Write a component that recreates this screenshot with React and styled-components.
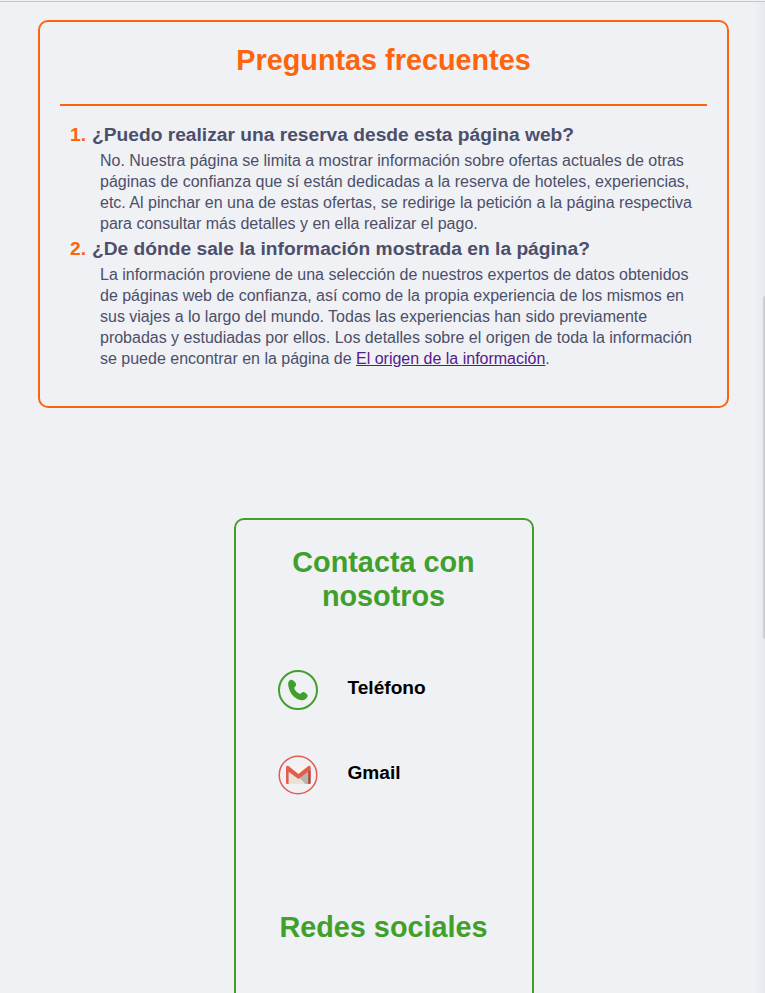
import React from 'react';
import styled, { createGlobalStyle } from 'styled-components';

const PEACH = '#fe640b';
const GREEN = '#40a02b';
const TEXT = '#4c4f69';

const GlobalStyle = createGlobalStyle`
  * { box-sizing: border-box; }
  body {
    margin: 0;
    overflow: hidden;
    background: #eff1f5;
    color: ${TEXT};
    font-family: "Liberation Sans", Arial, sans-serif;
  }
`;

const Page = styled.main`
  position: relative;
  height: 993px;
  overflow: hidden;
  border-top: 1px solid #eff1f5;
  display: flex;
  flex-direction: column;
  align-items: flex-start;
  box-shadow: inset 0 1px 0 #c3c9c5;
`;

const ScrollEdge = styled.div`
  position: absolute;
  top: 1px;
  right: 0;
  width: 12px;
  height: 991px;
  background: linear-gradient(to right, #eff1f5, #e6e9ef);
`;

const ScrollThumb = styled.div`
  position: absolute;
  top: 295px;
  right: 0;
  width: 2px;
  height: 343px;
  border-radius: 2px 0 0 2px;
  background: #cdced2;
`;

const Faq = styled.section`
  flex: none;
  width: 691px;
  height: 388px;
  margin: 19px 0 0 38px;
  padding: 0 20px;
  border: 2px solid ${PEACH};
  border-radius: 10px;
`;

const FaqTitle = styled.h1`
  height: 84px;
  margin: 0;
  padding-top: 21px;
  border-bottom: 2px solid ${PEACH};
  color: ${PEACH};
  font-size: 28.8px;
  line-height: 34px;
  text-align: center;
`;

const Questions = styled.ol`
  margin: 0;
  padding: 16px 0 0 10px;
  list-style: none;
`;

const Question = styled.h2`
  display: flex;
  gap: 6px;
  margin: 0;
  height: 28px;
  font-size: 19.2px;
  line-height: 26px;
  white-space: nowrap;
`;

const Index = styled.span`
  color: ${PEACH};
`;

const Answer = styled.p`
  margin: 0 0 2px;
  padding-left: 30px;
  font-size: 16px;
  letter-spacing: -0.005px;
  line-height: 21px;
  white-space: nowrap;
`;

const OriginLink = styled.a`
  color: #551a8b;
  text-decoration: underline;
`;

const Contact = styled.section`
  flex: none;
  width: 300px;
  height: 600px;
  margin: 110px 0 0 234px;
  padding: 25px 21px 0 20px;
  border: 2px solid ${GREEN};
  border-radius: 10px;
`;

const ContactTitle = styled.h2`
  margin: 0;
  color: ${GREEN};
  font-size: 28.8px;
  line-height: 34px;
  text-align: center;
`;

const Channels = styled.ul`
  display: flex;
  flex-direction: column;
  gap: 45px;
  margin: 0;
  padding: 57px 0 115px 22px;
  list-style: none;
`;

const Channel = styled.li`
  display: flex;
  gap: 29.5px;
  height: 40px;
  color: #000;
  font-size: 19.1px;
  font-weight: bold;
  line-height: 36px;

  svg { flex: none; }
`;

const PhoneIcon = () => (
  <svg width="40" height="40" viewBox="0 0 40 40">
    <circle cx="20" cy="20" r="19" fill="none" stroke={GREEN} strokeWidth="2" />
    <path
      fill={GREEN}
      d="M10.200 14.500C9.900 11.600 11.900 9.600 13.600 9.700c1.400.1 4 2.600 4.400 4.100.4 1.500-.3 2.500-1.300 3.300-.6.6-.4 1.400 0 2.200 1 1.900 2.400 3.300 4.400 4.300.8.400 1.400.300 2-.300.9-.9 2-1.700 3.300-1 1.500.7 3 2 3.200 3.300.2 2-2.400 4.800-5.800 4.600-7.600-.5-13.100-8.200-13.600-15.700Z"
    />
  </svg>
);

const GmailIcon = () => (
  <svg width="40" height="40" viewBox="0 0 40 40">
    <circle cx="20" cy="20" r="18.800" fill="none" stroke="#e55b4f" strokeWidth="1.500" />
    <path fill="#e7e4d7" d="M9 11.500h22.500v17.500h-22.500Z" />
    <path fill="#f5f3ec" d="M10 11h21L20.500 19.500Z" />
    <path fill="#b8b7ae" d="M20.500 22l10-6v13h-3Z" />
    <path fill="#e55b4f" d="M8 27.800V12.400q.1-2 2.100-1.600L20.400 18.900l10.300-8.100q2-.4 2 1.600v2.300L20.400 24.100 10.600 16.700V29H9.100Q8 29 8 27.800Z" />
    <path fill="#b93e38" d="M30.200 16.600l2.500-1.900v13.100q0 1.200-1.100 1.200h-1.400Z" />
  </svg>
);

const faqs = [
  {
    question: '¿Puedo realizar una reserva desde esta página web?',
    lines: [
      'No. Nuestra página se limita a mostrar información sobre ofertas actuales de otras',
      'páginas de confianza que sí están dedicadas a la reserva de hoteles, experiencias,',
      'etc. Al pinchar en una de estas ofertas, se redirige la petición a la página respectiva',
      'para consultar más detalles y en ella realizar el pago.',
    ],
  },
  {
    question: '¿De dónde sale la información mostrada en la página?',
    lines: [
      'La información proviene de una selección de nuestros expertos de datos obtenidos',
      'de páginas web de confianza, así como de la propia experiencia de los mismos en',
      'sus viajes a lo largo del mundo. Todas las experiencias han sido previamente',
      'probadas y estudiadas por ellos. Los detalles sobre el origen de toda la información',
      <>
        se puede encontrar en la página de <OriginLink href="#">El origen de la información</OriginLink>.
      </>,
    ],
  },
];

const channels = [
  { label: 'Teléfono', Icon: PhoneIcon },
  { label: 'Gmail', Icon: GmailIcon },
];

export default function App() {
  return (
    <>
      <GlobalStyle />
      <Page>
        <Faq>
          <FaqTitle>Preguntas frecuentes</FaqTitle>
          <Questions>
            {faqs.map(({ question, lines }, i) => (
              <li key={question}>
                <Question>
                  <Index>{i + 1}.</Index>
                  {question}
                </Question>
                <Answer>
                  {lines.map((line, n) => (
                    <React.Fragment key={n}>
                      {n > 0 && <br />}
                      {line}
                    </React.Fragment>
                  ))}
                </Answer>
              </li>
            ))}
          </Questions>
        </Faq>
        <Contact>
          <ContactTitle>Contacta con nosotros</ContactTitle>
          <Channels>
            {channels.map(({ label, Icon }) => (
              <Channel key={label}>
                <Icon />
                {label}
              </Channel>
            ))}
          </Channels>
          <ContactTitle>Redes sociales</ContactTitle>
        </Contact>
        <ScrollEdge />
        <ScrollThumb />
      </Page>
    </>
  );
}
